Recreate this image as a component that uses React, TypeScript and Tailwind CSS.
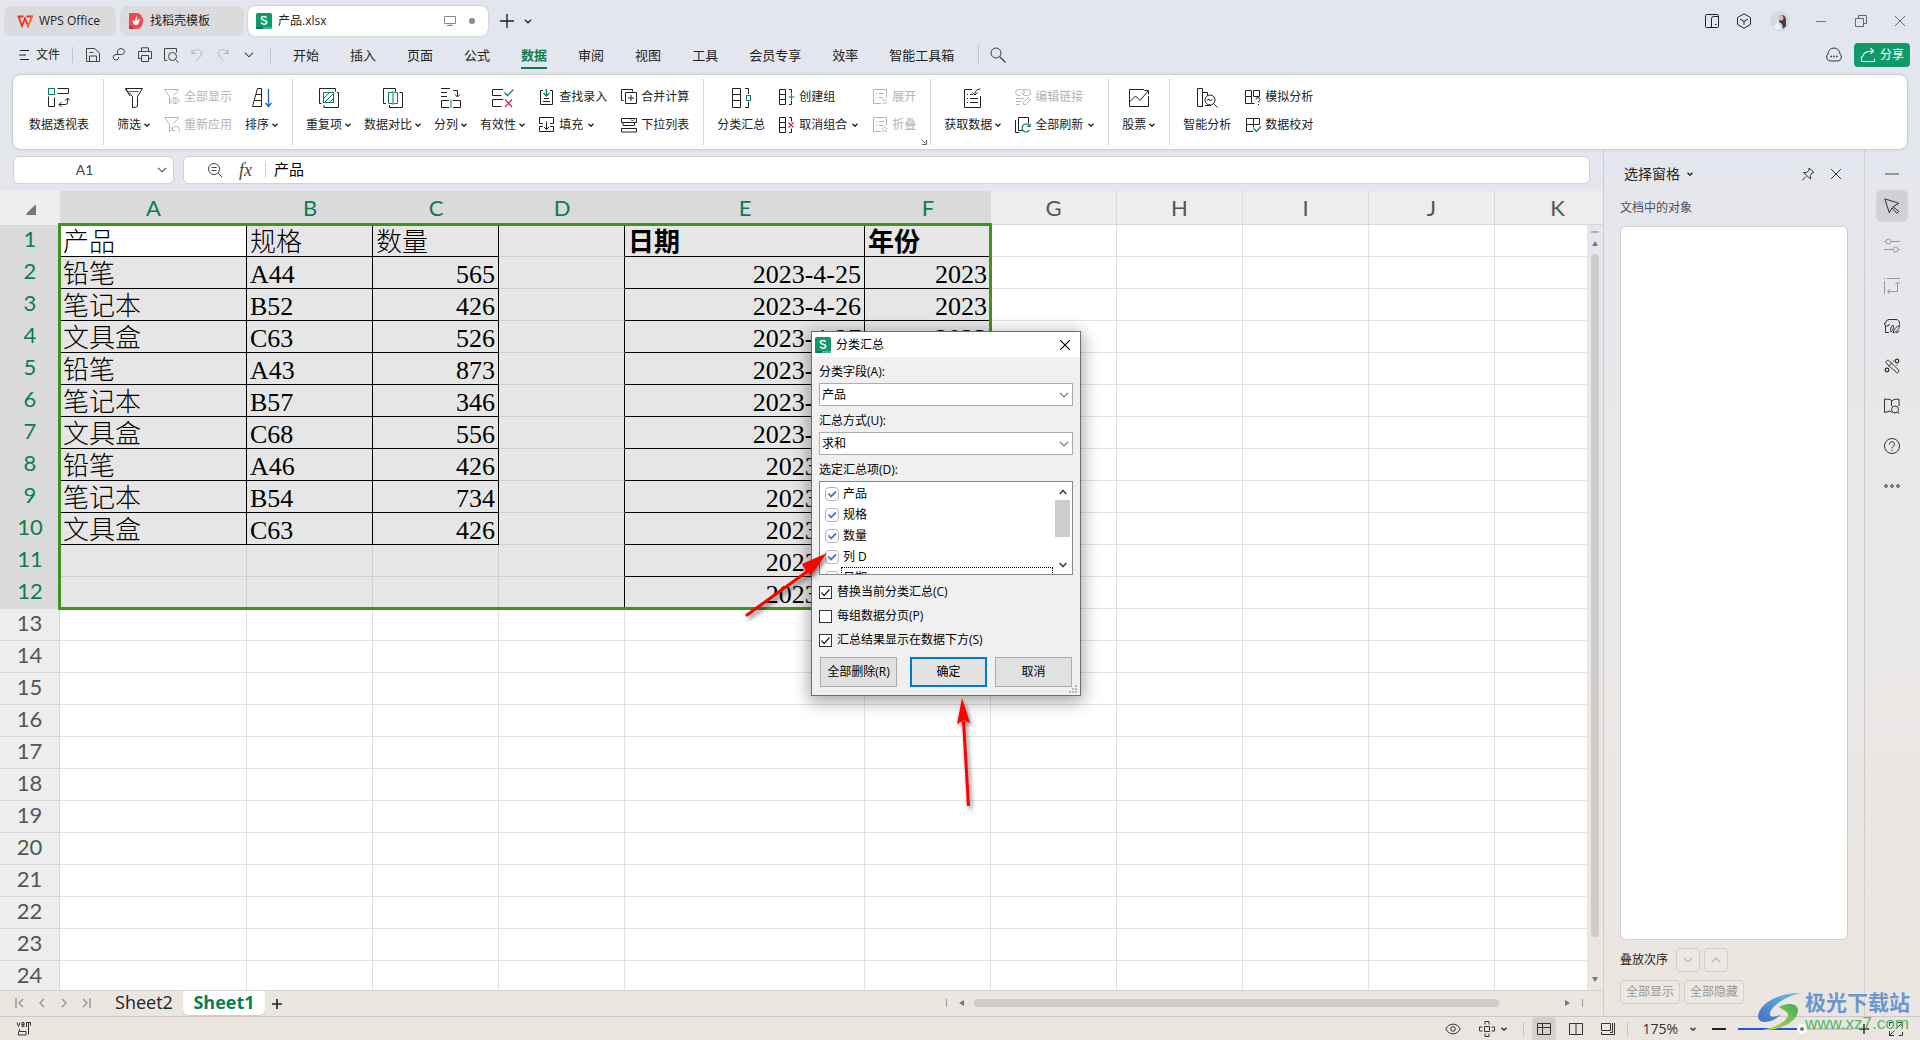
import { useState } from "react";
import type { ReactNode } from "react";

type IconProps = { w?: number; h?: number; className?: string; children: ReactNode };

function Icon({ w = 16, h = 16, className = "", children }: IconProps) {
  return (
    <svg width={w} height={h} viewBox={`0 0 ${w} ${h}`} fill="none" stroke="currentColor" className={`shrink-0 ${className}`}>
      {children}
    </svg>
  );
}

const green = "#0b8457";
const red = "#c9304f";

function Caret() {
  return (
    <Icon w={6} h={4}>
      <path d="M.5.8 3 3.2 5.5.8" strokeWidth="1.4" />
    </Icon>
  );
}

function Chevron({ className = "" }: { className?: string }) {
  return (
    <Icon w={10} h={6} className={className}>
      <path d="M1 .8 5 4.8 9 .8" strokeWidth="1.1" />
    </Icon>
  );
}

function SheetLogo() {
  return (
    <svg width="16" height="16" viewBox="0 0 16 16" className="shrink-0">
      <rect width="16" height="16" rx="1.5" fill="#12996a" />
      <path d="M0 14h7v2H1.500A1.500 1.500 0 0 1 0 14z" fill="#0a7550" />
      <path d="M7 14h9a1.500 1.500 0 0 1-1.500 2H7z" fill="#3db98c" />
      <path d="M10.600 4.800C10 3.700 9 3.400 8 3.400c-1.500 0-2.600.7-2.600 1.900 0 2.600 5.300 1.200 5.300 3.900 0 1.300-1.200 2-2.700 2-1.300 0-2.400-.5-2.900-1.700" fill="none" stroke="#fff" strokeWidth="1.500" />
    </svg>
  );
}

// ---- ribbon pieces ----

function BigButton({ label, caret, icon }: { label: string; caret?: boolean; icon: ReactNode }) {
  return (
    <button type="button" className="flex shrink-0 flex-col items-center gap-[9px] pt-[13px]">
      <Icon w={22} h={20}>{icon}</Icon>
      <span className="flex items-center gap-[3px] leading-4">
        {label}
        {caret && <Caret />}
      </span>
    </button>
  );
}

type Small = { label: string; caret?: boolean; off?: boolean; icon: ReactNode };

function SmallPair({ items }: { items: Small[] }) {
  return (
    <div className="ml-px flex shrink-0 flex-col gap-3 pt-[14px]">
      {items.map((it) => (
        <button
          key={it.label}
          type="button"
          className={it.off ? "flex h-4 items-center gap-1 text-[#b4b4b4]" : "flex h-4 items-center gap-1"}
        >
          <Icon>{it.icon}</Icon>
          <span className="leading-4">{it.label}</span>
          {it.caret && (
            <span className="ml-px">
              <Caret />
            </span>
          )}
        </button>
      ))}
    </div>
  );
}

function Sep() {
  return <div className="mt-1 ml-px h-[66px] w-px shrink-0 bg-[#d6d6d6]" />;
}

function Ribbon() {
  return (
    <div className="relative z-10 mx-[13px] flex h-[74px] gap-[13px] overflow-hidden rounded-lg bg-white pl-4 shadow-[0_0_2px_1px_#c5c6ce]">
      <BigButton
        label="数据透视表"
        icon={
          <>
            <rect x=".5" y=".5" width="6" height="6" stroke={green} />
            <path d="M9.500.5h11v5h-11M6.500 9.500v9h-6v-10M11 16.500h6.500a2 2 0 0 0 2-2V10.500M13.500 14l-2.500 2.500L13.500 19M17 12.500 19.500 10l2.500 2.500" />
          </>
        }
      />
      <Sep />
      <BigButton
        label="筛选"
        caret
        icon={
          <>
            <path d="M2.500.5h17l-5 8v10l-5 1.500v-11.500zM2.500 1l4.500 7" />
            <path d="M6.500 3.500h9" stroke={green} />
          </>
        }
      />
      <SmallPair
        items={[
          {
            label: "全部显示",
            off: true,
            icon: (
              <>
                <path d="M.5.5h14l-4.500 6M.5.5l5 7v7l1.500-.8" />
                <path d="M6.500 11.500c2.500-4 6.500-4 9 0-2.500 4-6.500 4-9 0z" />
                <circle cx="11" cy="11.500" r="1.500" />
              </>
            ),
          },
          {
            label: "重新应用",
            off: true,
            icon: <path d="M.5.5h14l-4.500 6M.5.5l5 7v7l1.500-.8M8.500 13.500a3.500 3.500 0 1 1 6.500 1M8 10v3.500h3" />,
          },
        ]}
      />
      <BigButton
        label="排序"
        caret
        icon={
          <>
            <path d="M6.500.5h4v18H1.500zM5 6.500h5.500M3.500 12.500h7" />
            <path d="M17.500 1v17M14.500 15l3 3.500 3-3.500" stroke="#2a5bd7" strokeWidth="1.300" />
          </>
        }
      />
      <Sep />
      <BigButton
        label="重复项"
        caret
        icon={
          <>
            <path d="M3.500 15.500h-2V.5h16v3M6 17v2.500h14.500v-15H19" />
            <rect x="5.500" y="4.500" width="10" height="10" stroke={green} />
            <path d="M5.500 10.500l6-6M6.500 14.500l9-9M11.500 14.500l4-4" stroke={green} />
          </>
        }
      />
      <BigButton
        label="数据对比"
        caret
        icon={
          <>
            <path d="M4 15.500H1.500V.5h12v3M7.500 17v2.500h13v-15h-3" />
            <path d="M10.500 4.500h-4v11h4M12 4.500h3.500v11h-3.500M11 3v14" stroke={green} />
          </>
        }
      />
      <BigButton
        label="分列"
        caret
        icon={
          <>
            <path d="M1 .5h9M1 4.500h6M1 8.500h6M13 2.500h4.500v6M15 6.500l2.500 2.500L20 6.500M9 12.500H1.500v7H9M13 12.500h7.500v7H13" />
            <path d="M11 11.500v8.500" stroke={green} />
          </>
        }
      />
      <BigButton
        label="有效性"
        caret
        icon={
          <>
            <path d="M11 1.500H.5v6h9M11 11.500H.5v7h9" />
            <path d="M12.500 4.500l3 3 6-6" stroke={green} strokeWidth="1.300" />
            <path d="M13 11.500l7 7.500M20 11.500l-7 7.500" stroke={red} strokeWidth="1.300" />
          </>
        }
      />
      <SmallPair
        items={[
          {
            label: "查找录入",
            icon: (
              <>
                <path d="M4 1.500H1.500v14h12v-14H11M4 12.500h7M5 9.500h5" />
                <path d="M7.500 0v6M4.500 4l3 3 3-3" stroke={green} strokeWidth="1.400" />
              </>
            ),
          },
          { label: "填充", caret: true, icon: <path d="M4 6.500H.5v-6h14v6H11M4 9.500H.5v5h14v-5H11M7.500 4.500v8M5 10l2.500 2.500L10 10" /> },
        ]}
      />
      <SmallPair
        items={[
          { label: "合并计算", icon: <path d="M2.500 11.500h-2v-11h11v2M4.500 3.500h11v11h-11zM10 6v6M7 9h6" /> },
          { label: "下拉列表", icon: <path d="M.5 1.500h15v4H.5zM10 2.500l1.500 1.500L13 2.500M2 8.500h11.500M.5 11.500h15v3.500H.5zM2 6v2M13.500 6v2" /> },
        ]}
      />
      <Sep />
      <BigButton
        label="分类汇总"
        icon={
          <>
            <path d="M2.500.5h8v19h-8zM2.500 6.500h8M2.500 12.500h8M15 .5h3.500V6M18.500 13.500v6H15" />
            <rect x="16.500" y="7.500" width="4" height="5" stroke={green} />
          </>
        }
      />
      <SmallPair
        items={[
          {
            label: "创建组",
            icon: (
              <>
                <path d="M.5.5h6v15h-6zM.5 5.500h6M.5 10.500h6M10 .5h2.500v4M12.500 11.500v4H10" />
                <path d="M9.500 8h6M12.500 5v6" stroke={green} />
              </>
            ),
          },
          {
            label: "取消组合",
            caret: true,
            icon: (
              <>
                <path d="M.5.5h6v15h-6zM.5 5.500h6M.5 10.500h6M10 .5h2.500v4M12.500 11.500v4H10" />
                <path d="M9.500 5.500l5 5M14.500 5.500l-5 5" stroke={red} strokeWidth="1.200" />
              </>
            ),
          },
        ]}
      />
      <SmallPair
        items={[
          { label: "展开", off: true, icon: <path d="M9 14.500H1.500V.5h13v8M4 4.500h1M7 4.500h5M4 8.500h1M7 8.500h4M10 10l2.500 2 2.500-2M10 13l2.500 2 2.500-2" /> },
          { label: "折叠", off: true, icon: <path d="M9 14.500H1.500V.5h13v8M4 4.500h1M7 4.500h5M4 8.500h1M7 8.500h4M10 12l2.500-2 2.500 2M10 15l2.500-2 2.500 2" /> },
        ]}
      />
      <div className="relative">
        <Sep />
        <Icon w={6} h={6} className="absolute right-1 bottom-1 text-[#666]">
          <path d="M.5.5l4 4M1 5.500h4.500V1" />
        </Icon>
      </div>
      <BigButton
        label="获取数据"
        caret
        icon={
          <path d="M10 1.500H2.500v18h16V8M18.500 1c-4 .5-5.500 2-5.500 6M10.500 4.500 13 7l2.500-2.500M5 6.500h1M8 6.500h3M5 10.500h1M8 10.500h8M5 14.500h1M8 14.500h8" />
        }
      />
      <SmallPair
        items={[
          {
            label: "编辑链接",
            off: true,
            icon: <path d="M5.500 6.500h-2a3 3 0 0 1 0-6h3a3 3 0 0 1 2 5M8 1.500a3 3 0 0 1 2-1h2.500a3 3 0 0 1 0 6h-3a2.500 2.500 0 0 1-2-3M1 9.500h8M1 12.500h5M1 15.500h4M8.500 15.500v-2.500l5-4.500 2 2-4.500 5z" />,
          },
          {
            label: "全部刷新",
            caret: true,
            icon: (
              <>
                <path d="M.5 3v12.500h4M8 13.500H3.500V.5h10v6" />
                <path d="M14.500 9a4 4 0 1 0 0 4M15 6.500V9.500h-3" stroke={green} strokeWidth="1.200" />
              </>
            ),
          },
        ]}
      />
      <Sep />
      <BigButton label="股票" caret icon={<path d="M16 1.500H1.500v17h19V8M1.500 14l6-6 4.500 4.500 8-9.500M16.500 2.500h4v4" />} />
      <Sep />
      <BigButton
        label="智能分析"
        icon={
          <>
            <path d="M7 18.500H1.500V.5h5v18M6.500 4.500h5v3M15 17.500h-6" />
            <circle cx="14" cy="12" r="5" />
            <path d="M17.500 15.500l4 4M11 12.500l2-1.500 1.500 2 2-2" />
          </>
        }
      />
      <SmallPair
        items={[
          { label: "模拟分析", icon: <path d="M6.500 1.500h-6v6h6zM6.500 7.500v7h-6v-7M8.500 7.500h6v-6h-6zM9.500 14.500h-3M11 10.500a2 2 0 1 1 2.500 2v1M13.500 15v1" /> },
          {
            label: "数据校对",
            icon: (
              <>
                <path d="M1.500 1.500h13v6H1.500zM8.500 1.500v9M1.500 7.500v7H8" />
                <path d="M8.500 11.500l3 3 4.500-5" stroke={green} strokeWidth="1.300" />
              </>
            ),
          },
        ]}
      />
    </div>
  );
}

// ---- title bar + menu ----

function TitleBar() {
  return (
    <div className="flex h-[38px] items-start px-1 pt-1.5">
      <button type="button" className="flex h-[30px] w-28 items-center gap-1.5 rounded-lg bg-[#dbdbde] pl-[13px]">
        <svg width="16" height="13" viewBox="0 0 16 13" fill="none" stroke="#e8301f" strokeWidth="1.800">
          <path d="M.5 1.500h6M1.500 1.500 5 11 8 3.500 11 11l4-9.500H9.500" />
          <path d="M11 11l4-9.500" stroke="#fb7b2a" />
        </svg>
        WPS Office
      </button>
      <button type="button" className="ml-1 flex h-[30px] w-[124px] items-center gap-[7px] rounded-lg bg-[#dbdbde] pl-[9px]">
        <svg width="14" height="16" viewBox="0 0 14 16">
          <path d="M0 0h8a6 8 0 0 1 0 16H0z" fill="#ee4a50" />
          <path d="M0 13h3l2 3H0z" fill="#c5303c" />
          <path d="M7.500 3c1 2 .5 3 0 4.500C9 7 10 6 10.500 5c.5 4-1 7-3.500 7S3.500 9.500 4 7c1 .5 1.500 1 2 2 .3-2.500.5-4 1.500-6z" fill="#fff" />
        </svg>
        找稻壳模板
      </button>
      <button type="button" className="ml-1 flex h-[30px] w-60 items-center gap-1.5 rounded-lg bg-white pl-2 shadow-[0_0_1px_1px_#d4d5dc]">
        <SheetLogo />
        产品.xlsx
        <Icon w={12} h={12} className="ml-auto text-[#888]">
          <path d="M.5 1.500h11v7H.5zM6 8.500v2M3 10.500h6" />
        </Icon>
        <span className="mr-[13px] ml-[7px] size-1.5 rounded-full bg-[#8c8c8c]" />
      </button>
      <div className="ml-3 flex h-[30px] items-center gap-2.5">
        <Icon w={14} h={14}>
          <path d="M7 0v14M0 7h14" strokeWidth="1.400" />
        </Icon>
        <Icon w={8} h={5}>
          <path d="M1 .8l3 3 3-3" strokeWidth="1.300" />
        </Icon>
      </div>
      <div className="ml-auto flex h-[30px] items-center pr-[10px]">
        <Icon className="mr-4">
          <rect x="1.500" y="1.500" width="13" height="13" rx="1" />
          <path d="M7.500 14.500v-9q0-2 2-2h5M11 11.500h1.500" />
        </Icon>
        <Icon className="mr-[18px]">
          <path d="M8 .8l6.500 3.700v7L8 15.200 1.500 11.500v-7zM4 6l4 2.300L12 6M8 8.300V12" />
        </Icon>
        <svg width="20" height="20" viewBox="0 0 20 20" className="mr-[26px]">
          <circle cx="10" cy="10" r="10" fill="#cfdde3" />
          <path d="M10 5c3-2 6 0 6 4v6l-3 3-1-5-3-2z" fill="#4a3a44" />
          <circle cx="11" cy="7" r="2.500" fill="#e4b9ac" />
          <path d="M3 16l5-5 3 7-4 .5z" fill="#eef6fa" />
        </svg>
        <Icon w={10} h={10} className="mr-[29px] text-[#777]">
          <path d="M0 5.500h10" />
        </Icon>
        <Icon w={12} h={12} className="mr-[27px] text-[#666]">
          <path d="M.5 3.500h8v8h-8zM3.500 3.500v-3h8v8h-3" />
        </Icon>
        <Icon w={12} h={12} className="text-[#666]">
          <path d="M1 1l10 10M11 1 1 11" />
        </Icon>
      </div>
    </div>
  );
}

const menus = ["开始", "插入", "页面", "公式", "数据", "审阅", "视图", "工具", "会员专享", "效率", "智能工具箱"];

function MenuBar() {
  return (
    <div className="flex h-[37px] items-center pr-[10px] pb-[3px] pl-[19px]">
      <button type="button" className="flex items-center gap-[7px]">
        <Icon w={10} h={12}>
          <path d="M1 1.500h9M0 6h7M1 10.500h9" />
        </Icon>
        文件
      </button>
      <div className="mx-3 h-4 w-px bg-[#c3c5cc]" />
      <div className="flex items-center gap-2.5 text-[#444]">
        <Icon>
          <path d="M6 14.500H1.500v-13h8l5 4.500v8.500zM4.500 14v-5h7v5M4.500 5.500h4" />
        </Icon>
        <Icon>
          <path d="M6.500 7.500V4a3.500 3 0 1 1 4 3.500H5a2.800 2.800 0 1 0 2.500 4V10" />
        </Icon>
        <Icon>
          <path d="M4 11.500H1.500v-7h13v7H12M4.500 4V.8h7V4M4.500 8.500h7v6h-7z" />
        </Icon>
        <Icon>
          <path d="M4 13.500H1.500V1.500h12v4" />
          <circle cx="9.500" cy="9.500" r="4" />
          <path d="M12.500 12.500l3 3" />
        </Icon>
        <Icon className="text-[#b3b4ba]">
          <path d="M3 2v4.500h4.500M3 6.500c2-5 9-5 9.500-.5.300 3-3 5-5 8" />
        </Icon>
        <Icon className="text-[#b3b4ba]">
          <path d="M13 2v4.500H8.500M13 6.500c-2-5-9-5-9.500-.5-.3 3 3 5 5 8" />
        </Icon>
        <span className="ml-[3px]">
          <Chevron />
        </span>
      </div>
      <div className="ml-4 h-4 w-px bg-[#c3c5cc]" />
      <nav className="ml-[22px] flex gap-[31px] text-[13px]">
        {menus.map((m) => (
          <button
            key={m}
            type="button"
            className={
              m === "数据"
                ? "border-y-2 border-t-transparent border-b-[#0b7d53] py-0.5 leading-5 font-bold text-[#0b7d53]"
                : "border-y-2 border-transparent py-0.5 leading-5"
            }
          >
            {m}
          </button>
        ))}
      </nav>
      <div className="ml-6 h-5 w-px bg-[#c3c5cc]" />
      <Icon className="ml-[11px] text-[#444]">
        <circle cx="6" cy="6" r="5" />
        <path d="M9.500 9.500l6 6" strokeWidth="1.200" />
      </Icon>
      <div className="ml-auto flex items-center gap-3">
        <Icon className="text-[#333]">
          <path d="M4.500 14a4 4 0 0 1-2.500-7A6 6 0 0 1 14 7a4 4 0 0 1-2.500 7z" />
          <path d="M4.500 9.500h1.500M7.300 9.500h1.500M10 9.500h1.500" strokeWidth="1.500" />
        </Icon>
        <button type="button" className="flex h-6 w-14 items-center justify-center gap-1 rounded bg-[#12996a] text-white">
          <Icon>
            <path d="M1.500 9.500v5h13v-3M2.500 10c.5-4 4-6 10.500-6M10.500 1l3 3-3 3" strokeWidth="1.100" />
          </Icon>
          分享
        </button>
      </div>
    </div>
  );
}

// ---- sheet ----

const cols = ["A", "B", "C", "D", "E", "F", "G", "H", "I", "J", "K"];

const goods = [
  ["产品", "规格", "数量"],
  ["铅笔", "A44", "565"],
  ["笔记本", "B52", "426"],
  ["文具盒", "C63", "526"],
  ["铅笔", "A43", "873"],
  ["笔记本", "B57", "346"],
  ["文具盒", "C68", "556"],
  ["铅笔", "A46", "426"],
  ["笔记本", "B54", "734"],
  ["文具盒", "C63", "426"],
];

const dates = [
  "日期",
  "2023-4-25",
  "2023-4-26",
  "2023-4-27",
  "2023-4-28",
  "2023-4-29",
  "2023-4-30",
  "2023-5-1",
  "2023-5-2",
  "2023-5-3",
  "2023-5-4",
  "2023-5-5",
];

function cellText(r: number, c: number) {
  if (c < 3) return goods[r]?.[c] ?? "";
  if (c === 4) return dates[r] ?? "";
  if (c === 5 && r < 12) return r === 0 ? "年份" : "2023";
  return "";
}

function cellClass(r: number, c: number) {
  const picked = r < 12 && c < 6;
  const list = ["h-8 border-r border-b p-0 px-[3px] align-bottom leading-[26px] whitespace-nowrap"];
  if (r === 0 && c === 0) list.push("bg-white");
  else list.push(picked ? "bg-[#e6e6e6]" : "bg-white");

  if ((c < 3 && r < 10) || ((c === 4 || c === 5) && r < 12)) list.push("border-black");
  else if (c === 3 && r < 12) list.push("border-r-black border-b-[#d0d0d0]");
  else list.push(picked ? "border-[#d0d0d0]" : "border-[#e2e2e2]");

  if (r > 0 && (c === 2 || c === 4 || c === 5)) list.push("text-right");
  if (r === 0 && c > 3) list.push("font-bold");
  return list.join(" ");
}

function Grid() {
  return (
    <div className="relative min-w-0 flex-1 overflow-hidden">
      <table className="w-[1621px] table-fixed border-separate border-spacing-0 text-[26px] text-black [font-family:'Liberation_Serif','Noto_Sans_CJK_SC',serif] font-light">
        <colgroup>
          <col className="w-[60px]" />
          <col className="w-[187px]" />
          <col className="w-[126px]" />
          <col className="w-[126px]" />
          <col className="w-[126px]" />
          <col className="w-[240px]" />
          <col className="w-[126px]" />
          <col className="w-[126px]" />
          <col className="w-[126px]" />
          <col className="w-[126px]" />
          <col className="w-[126px]" />
          <col className="w-[126px]" />
        </colgroup>
        <thead>
          <tr className="[font-family:Lato,sans-serif] text-[22px]">
            <th className="h-[34px] bg-[#eee] p-0">
              <svg width="10" height="10" viewBox="0 0 10 10" className="mt-1 ml-[26px]">
                <path d="M9 0a1 1 0 0 1 1 1v9H1C0 10 0 9 .5 8.500z" fill="#777" />
              </svg>
            </th>
            {cols.map((c, i) => (
              <th
                key={c}
                className={
                  i < 6
                    ? "h-[34px] border-b border-[#d8d8d8] bg-[#dadada] p-0 leading-7 font-normal text-[#0b7d53]"
                    : "h-[34px] border-r border-b border-[#d8d8d8] bg-[#ededed] p-0 leading-7 font-normal text-[#555]"
                }
              >
                {c}
              </th>
            ))}
          </tr>
        </thead>
        <tbody>
          {Array.from({ length: 24 }, (_, r) => (
            <tr key={r}>
              <th
                className={
                  r < 12
                    ? "h-8 bg-[#dadada] p-0 pb-1 text-[22px] leading-6 font-normal text-[#0b7d53] [font-family:Lato,sans-serif]"
                    : "h-8 border-r border-b border-[#d8d8d8] bg-[#ededed] p-0 pb-1 text-[22px] leading-6 font-normal text-[#555] [font-family:Lato,sans-serif]"
                }
              >
                {r + 1}
              </th>
              {cols.map((c, i) => (
                <td key={c} className={cellClass(r, i)}>
                  {cellText(r, i)}
                </td>
              ))}
            </tr>
          ))}
        </tbody>
      </table>
      {/* selection frame A1:F12 */}
      <div className="pointer-events-none absolute top-8 left-[58px] h-[387px] w-[934px] border-[3px] border-[#43911f]" />
    </div>
  );
}

function VScroll() {
  return (
    <div className="flex w-4 flex-col items-center">
      <div className="h-[34px] w-full border-b border-[#d8d8d8] bg-[#ededed]" />
      <div className="mt-1.5 h-0.5 w-2 bg-[#b0b0b4]" />
      <svg width="6" height="5" viewBox="0 0 6 5" className="mt-2" fill="#777">
        <path d="M3 0l3 5H0z" />
      </svg>
      <div className="mt-2 mb-10 w-2 flex-1 rounded bg-[#cfccc9]" />
      <svg width="6" height="5" viewBox="0 0 6 5" className="mb-2" fill="#777">
        <path d="M3 5 0 0h6z" />
      </svg>
    </div>
  );
}

function SheetTabs() {
  return (
    <div className="flex h-[26px] shrink-0 items-start border-t border-[#d5d2d0] text-[18px] leading-[22px] [font-family:'Open_Sans',sans-serif]">
      <div className="flex h-6 items-center gap-3 pl-[15px] text-[#999]">
        <Icon w={10} h={10}>
          <path d="M1 0v10M8 1 4 5l4 4" strokeWidth="1.500" />
        </Icon>
        <Icon w={10} h={10}>
          <path d="M7 1 3 5l4 4" strokeWidth="1.500" />
        </Icon>
        <Icon w={10} h={10}>
          <path d="M3 1l4 4-4 4" strokeWidth="1.500" />
        </Icon>
        <Icon w={10} h={10}>
          <path d="M2 1l4 4-4 4M9 0v10" strokeWidth="1.500" />
        </Icon>
      </div>
      <button type="button" className="ml-[14px] h-6 w-[78px] pb-0.5">
        Sheet2
      </button>
      <button type="button" className="h-6 w-[82px] rounded-b-md bg-white pb-0.5 font-bold text-[#0b7d53] shadow-[0_1px_1px_0_#cfccca]">
        Sheet1
      </button>
      <Icon w={10} h={24} className="ml-[7px]">
        <path d="M5 8v10M0 13h10" strokeWidth="1.600" />
      </Icon>
      <div className="ml-auto flex h-6 items-center pr-5">
        <div className="h-2 w-px bg-[#999]" />
        <svg width="5" height="6" viewBox="0 0 5 6" className="mr-2.5 ml-3" fill="#777">
          <path d="M5 0v6L0 3z" />
        </svg>
        <div className="h-2 w-[525px] rounded bg-[#d0ccc9]" />
        <svg width="5" height="6" viewBox="0 0 5 6" className="mr-3 ml-[66px]" fill="#777">
          <path d="M0 0v6l5-3z" />
        </svg>
        <div className="h-2 w-px bg-[#999]" />
      </div>
    </div>
  );
}

function FormulaBar() {
  return (
    <div className="flex gap-[9px] px-[13px] py-[7px]">
      <div className="flex h-7 w-[161px] items-center rounded-md border border-[#d0d1d8] bg-white pr-1.5 text-[#444]">
        <input
          aria-label="名称框"
          defaultValue="A1"
          className="w-full min-w-0 pr-0.5 text-center text-sm outline-none [font-family:Lato,sans-serif]"
        />
        <Chevron />
      </div>
      <div className="flex h-7 flex-1 items-center rounded-md border border-[#d0d1d8] bg-white pl-[23px] text-[#444]">
        <Icon>
          <circle cx="7" cy="7" r="5.500" />
          <path d="M11 11l4 4M4.500 5.500h5M4.500 8.500h5" />
        </Icon>
        <span className="ml-4 w-4 text-[18px] leading-5 italic [font-family:'Liberation_Serif',serif]">fx</span>
        <div className="ml-2.5 mr-2 h-4 w-px bg-[#ccc]" />
        <input aria-label="编辑栏" defaultValue="产品" className="flex-1 pb-[3px] text-[15px] text-black outline-none" />
      </div>
    </div>
  );
}

// ---- right side ----

function SelectionPane() {
  return (
    <aside className="flex w-[261px] shrink-0 flex-col border-l border-[#cdced3] px-4 pt-4 pb-3">
      <div className="flex h-[18px] items-center pl-1 text-sm">
        选择窗格
        <span className="ml-[7px]">
          <Caret />
        </span>
        <Icon w={14} h={14} className="ml-auto text-[#333]">
          <path d="M8 1l5 4.500-2 .5-1.500 2.500v3.500L2.500 5.500h3L8 3.500zM5 9.500 1 13.500" />
        </Icon>
        <Icon w={12} h={12} className="mr-1.5 ml-[15px] text-[#333]">
          <path d="M1 1l10 10M11 1 1 11" />
        </Icon>
      </div>
      <div className="mt-[17px] leading-4 text-[#4a4f63]">文档中的对象</div>
      <div className="mt-2.5 flex-1 rounded-md border border-[#cfcfd6] bg-white" />
      <div className="mt-2 flex h-6 items-center">
        叠放次序
        <button type="button" aria-label="下移" className="ml-2 flex size-6 items-center justify-center rounded border border-[#d6cfc9] bg-[#ece8e4] text-[#aaa]">
          <Chevron />
        </button>
        <button type="button" aria-label="上移" className="ml-1 flex size-6 items-center justify-center rounded border border-[#d6cfc9] bg-[#ece8e4] text-[#aaa]">
          <Chevron className="rotate-180" />
        </button>
      </div>
      <div className="mt-2 flex gap-1 text-[#9b9793]">
        <button type="button" className="h-6 w-[60px] rounded border border-[#d6cfc9] bg-[#ece8e4]">
          全部显示
        </button>
        <button type="button" className="h-6 w-[60px] rounded border border-[#d6cfc9] bg-[#ece8e4]">
          全部隐藏
        </button>
      </div>
    </aside>
  );
}

function SideBar() {
  return (
    <div className="flex w-14 shrink-0 flex-col items-center border-l border-[#cdced3] pt-6 pr-0.5 text-[#333]">
      <div className="h-0.5 w-3.5 bg-[#999]" />
      <div className="mt-[15px] flex size-8 items-center justify-center rounded-md bg-[#d0d1d7]">
        <Icon>
          <path d="M.8.8l14 4.500-6 3.500 6 4.500-2 2-5-5.500-2.500 5z" />
        </Icon>
      </div>
      <div className="mt-4 flex flex-col gap-6">
        <Icon className="text-[#999]">
          <path d="M0 3.500h2M7 3.500h9M0 11.500h9M14 11.500h2" />
          <circle cx="4.500" cy="3.500" r="2.500" />
          <circle cx="11.500" cy="11.500" r="2.500" />
        </Icon>
        <Icon className="text-[#999]">
          <path d="M0 .5h1M3 .5h13M.5 3v13M13.500 5v8.500h-10M11 6.500l2.500-2.500L16 6.500M6 11l-2.500 2.500L6 16" />
        </Icon>
        <Icon>
          <path d="M5 14.500H1.500V8M1.500 5.500a3.500 4 0 0 1 3.500-4h7a3.500 3.500 0 0 1 3.500 4v1M.5 5a2.500 2.500 0 0 0 5 1" />
          <path d="M7 14c-1-3 0-6 2-7 .8 2.500.5 5-2 7zM9 15c1-4 3-6.500 6.500-7.500 0 2.500-2 6-6.500 7.500zM12 15l3.500-2" />
        </Icon>
        <Icon>
          <path d="M2 4.500c0-2 2-3 3.500-1.500l9 9c1 1.500-.5 3.500-2 2.500L3 6zM4.500 8 8 5" />
          <circle cx="13" cy="3" r="1.800" strokeWidth="1.300" />
          <circle cx="3" cy="12" r="1.800" strokeWidth="1.300" />
          <path d="M9 3h1M13 6.500v1" />
        </Icon>
        <Icon>
          <path d="M7.500 14.500 6 13 .5 14.500V1l5.500.5 2 1.500 2-1.500 5-.5v7M7.500 3v5" />
          <circle cx="11" cy="11.500" r="3.500" />
          <path d="M13.500 14l2 2" />
        </Icon>
        <Icon>
          <circle cx="8" cy="8" r="7.500" />
          <path d="M5.500 6.500a2.500 2.500 0 1 1 3.500 2c-.7.400-1 .8-1 1.800M8 11.500v1.500" />
        </Icon>
        <Icon>
          <circle cx="2" cy="8" r="1.300" />
          <circle cx="8" cy="8" r="1.300" />
          <circle cx="14" cy="8" r="1.300" />
        </Icon>
      </div>
    </div>
  );
}

function StatusBar() {
  const [zoom, setZoom] = useState(57);
  return (
    <div className="flex h-6 shrink-0 items-center border-t border-[#cbc7c4] pr-[17px] pl-4 text-[#333]">
      <Icon>
        <path d="M1 1.500l1.500 4L4 1.500M6 1.500h2v4H6zM6 3.500h2M10.500 6V1.500h4v3M12.500 2v11.500M3.500 8v2.500h6.500v3.500H2.500v-3.500" />
      </Icon>
      <div className="ml-auto flex items-center">
        <Icon className="mr-[18px]">
          <path d="M.8 8C4 1.500 12 1.500 15.200 8 12 14.500 4 14.500.8 8z" />
          <circle cx="8" cy="8" r="2.300" />
        </Icon>
        <Icon className="mr-1.5">
          <path d="M5.500 5.500h5v5h-5zM6 3.500v-3h4v3M6 12.500v3h4v-3M3.500 6h-3v4h3M12.500 6h3v4h-3" />
        </Icon>
        <Caret />
        <div className="ml-4 h-3.5 w-px bg-[#c9c4c0]" />
        <div className="ml-2 flex h-6 w-6 items-center justify-center rounded bg-[#d5d0cc]">
          <Icon w={14} h={14}>
            <path d="M.5 1.500h13v11H.5zM.5 5.500h13M5.500 1.500v11" />
          </Icon>
        </div>
        <Icon w={14} h={14} className="ml-[13px]">
          <path d="M.5 1.500h13v11H.5zM7 1.500v11" />
        </Icon>
        <Icon w={14} h={14} className="ml-[18px]">
          <path d="M.5 1.500h9v7h-9zM13.500 1v11.500H.5V10M11.500 1v9.500H9" />
        </Icon>
        <div className="ml-3 h-3.5 w-px bg-[#c9c4c0]" />
        <span className="mr-3 ml-3.5 text-sm [font-family:'Open_Sans',sans-serif]">175%</span>
        <Caret />
        <div className="mr-3 ml-4 h-0.5 w-3.5 bg-[#222]" />
        <input
          type="range"
          aria-label="缩放"
          value={zoom}
          onChange={(e) => setZoom(Number(e.target.value))}
          style={{ background: `linear-gradient(to right, #2457e0 ${zoom}%, #c6c1bd ${zoom}%)` }}
          className="h-0.5 w-[114px] appearance-none [&::-webkit-slider-thumb]:size-2.5 [&::-webkit-slider-thumb]:appearance-none [&::-webkit-slider-thumb]:rounded-full [&::-webkit-slider-thumb]:border-[3px] [&::-webkit-slider-thumb]:border-white [&::-webkit-slider-thumb]:bg-[#777]"
        />
        <Icon w={10} h={10} className="ml-[7px]">
          <path d="M5 0v10M0 5h10" strokeWidth="1.500" />
        </Icon>
        <Icon w={14} h={14} className="ml-5">
          <path d="M9 .5h4.500V5M5 13.500H.5V9M13.500.5 8.500 5.500M.5 13.500l5-5M.5 4V.5H4M13.500 10v3.500H10" />
        </Icon>
      </div>
    </div>
  );
}

// ---- 分类汇总 dialog ----

function Field({ id, label, value }: { id: string; label: string; value: string }) {
  return (
    <div className="mb-[7px]">
      <label htmlFor={id} className="block leading-4">
        {label}
      </label>
      <div className="relative mt-[3px] h-[23px]">
        <select id={id} className="size-full appearance-none border border-[#adadad] bg-white pl-0.5 outline-none">
          <option>{value}</option>
        </select>
        <Chevron className="pointer-events-none absolute top-[9px] right-1 text-[#666]" />
      </div>
    </div>
  );
}

function Tick({ label, on, blue }: { label: string; on?: boolean; blue?: boolean }) {
  return (
    <label className={blue ? "flex h-[21px] items-center gap-1" : "flex h-4 items-center gap-[5px]"}>
      <span className="relative flex shrink-0">
        <input
          type="checkbox"
          defaultChecked={on}
          className={
            blue
              ? "peer size-3.5 appearance-none rounded-sm border border-[#b5b5b5] bg-white"
              : "peer size-[13px] appearance-none border border-[#333] bg-white"
          }
        />
        <svg
          width="13"
          height="13"
          viewBox="0 0 13 13"
          fill="none"
          stroke={blue ? "#4a76c8" : "#222"}
          strokeWidth={blue ? 1.8 : 1.2}
          className="pointer-events-none absolute inset-0 hidden peer-checked:block"
        >
          <path d={blue ? "M3.500 6.500l2.500 3 5-5" : "M2.500 6.500 5 9.500l5.500-6"} />
        </svg>
      </span>
      {label}
    </label>
  );
}

function SubtotalDialog() {
  return (
    <div
      role="dialog"
      className="absolute top-[331px] left-[811px] z-20 w-[270px] border border-[#6e6e6e] bg-[#f0f0f0] text-black shadow-[0_4px_16px_2px_rgba(0,0,0,0.35)]"
    >
      <div className="flex h-[25px] items-center gap-[5px] bg-white pl-[3px]">
        <SheetLogo />
        分类汇总
        <button type="button" aria-label="关闭" className="mr-2.5 ml-auto">
          <Icon w={10} h={10}>
            <path d="M0 0l10 10M10 0 0 10" strokeWidth="1.100" />
          </Icon>
        </button>
      </div>
      <div className="relative px-[7px] pt-[7px] pb-2">
        <Field id="field" label="分类字段(A):" value="产品" />
        <Field id="method" label="汇总方式(U):" value="求和" />
        <div className="mb-[3px] leading-4">选定汇总项(D):</div>
        <div className="flex h-[94px] overflow-hidden border border-[#828790] bg-white pr-0.5">
          <div className="flex-1 pt-px pl-[5px]">
            <Tick label="产品" on blue />
            <Tick label="规格" on blue />
            <Tick label="数量" on blue />
            <Tick label="列 D" on blue />
            <div className="relative">
              <Tick label="日期" blue />
              <div className="absolute top-0 right-0.5 left-4 h-5 border border-dotted border-black" />
            </div>
          </div>
          <div className="flex w-[15px] flex-col items-center pt-[7px]">
            <Icon w={8} h={6} className="text-[#444]">
              <path d="M.7 5 4 1.500 7.300 5" strokeWidth="1.700" />
            </Icon>
            <div className="mt-[5px] h-[37px] w-full bg-[#cdcdcd]" />
            <Icon w={8} h={6} className="mt-[25px] text-[#444]">
              <path d="M.7 1 4 4.500 7.300 1" strokeWidth="1.700" />
            </Icon>
          </div>
        </div>
        <div className="my-[9px] flex flex-col gap-2">
          <Tick label="替换当前分类汇总(C)" on />
          <Tick label="每组数据分页(P)" />
          <Tick label="汇总结果显示在数据下方(S)" on />
        </div>
        <div className="flex px-px">
          <button type="button" className="h-[30px] w-[77px] border border-[#adadad] bg-[#e1e1e1] whitespace-nowrap">
            全部删除(R)
          </button>
          <button type="button" className="ml-[13px] h-[30px] w-[77px] border-2 border-[#0078d7] bg-[#e1e1e1]">
            确定
          </button>
          <button type="button" className="ml-2 h-[30px] w-[77px] border border-[#adadad] bg-[#e1e1e1]">
            取消
          </button>
        </div>
        <svg width="8" height="8" viewBox="0 0 8 8" fill="#b8b8b8" className="absolute right-[3px] bottom-0.5">
          <path d="M6 0h2v2H6zM3 3h2v2H3zM6 3h2v2H6zM0 6h2v2H0zM3 6h2v2H3zM6 6h2v2H6z" />
        </svg>
      </div>
    </div>
  );
}

function Arrows() {
  return (
    <>
      <svg
        width="90"
        height="75"
        viewBox="0 0 90 75"
        className="pointer-events-none absolute top-[550px] left-[742px] z-30 drop-shadow-[2px_3px_2px_rgba(0,0,0,0.5)]"
      >
        <path d="M5 65 66 21" stroke="#f00" strokeWidth="3" strokeLinecap="round" />
        <path d="M85 3 69 25l-5-4-4-7z" fill="#f00" />
      </svg>
      <svg
        width="30"
        height="116"
        viewBox="0 0 30 116"
        className="pointer-events-none absolute top-[695px] left-[950px] z-30 drop-shadow-[2px_3px_2px_rgba(0,0,0,0.5)]"
      >
        <path d="M18.500 111 13.500 26" stroke="#f00" strokeWidth="3" />
        <path d="M12 3l8 25-6-3-7 4z" fill="#f00" />
      </svg>
    </>
  );
}

function Watermark() {
  return (
    <div className="pointer-events-none absolute right-2.5 bottom-1.5 z-30 flex items-center gap-1">
      <svg width="44" height="40" viewBox="0 0 44 40">
        <defs>
          <linearGradient id="wave" x1="0" y1="1" x2="1" y2="0">
            <stop offset="0" stopColor="#4a6fc0" />
            <stop offset="1" stopColor="#5cc3ea" />
          </linearGradient>
          <linearGradient id="leaf" x1="0" y1="1" x2="1" y2="0">
            <stop offset="0" stopColor="#c8d84a" />
            <stop offset="1" stopColor="#3fae5c" />
          </linearGradient>
        </defs>
        <path d="M44 1C22 0 2 12 1 24c0 4 3 6 7 6 6 0 12-3 16-8-5 3-10 4-11 1C12 16 26 5 44 1z" fill="url(#wave)" />
        <path d="M22 15c8-5 19-4 19 3 0 11-17 21-36 20 12-2 24-8 26-14 1-4-5-6-9-9z" fill="url(#leaf)" />
      </svg>
      <div>
        <div className="text-[21px] leading-6 font-bold text-[#6a97cf]">极光下载站</div>
        <div className="text-[17px] leading-5 text-[#4fb86c] [font-family:'Liberation_Sans',sans-serif]">www.xz7.com</div>
      </div>
    </div>
  );
}

function App() {
  return (
    <div className="relative flex h-screen flex-col overflow-hidden bg-linear-to-b from-[#e3e6ef] via-[#e9e8e9] to-[#ece5df] text-xs text-[#222] [font-family:'Open_Sans','Noto_Sans_CJK_SC',sans-serif]">
      <TitleBar />
      <MenuBar />
      <Ribbon />
      <div className="flex min-h-0 flex-1">
        <main className="flex min-w-0 flex-1 flex-col">
          <FormulaBar />
          <div className="flex min-h-0 flex-1">
            <Grid />
            <VScroll />
          </div>
          <SheetTabs />
        </main>
        <SelectionPane />
        <SideBar />
      </div>
      <StatusBar />
      <SubtotalDialog />
      <Arrows />
      <Watermark />
    </div>
  );
}

export default App;
